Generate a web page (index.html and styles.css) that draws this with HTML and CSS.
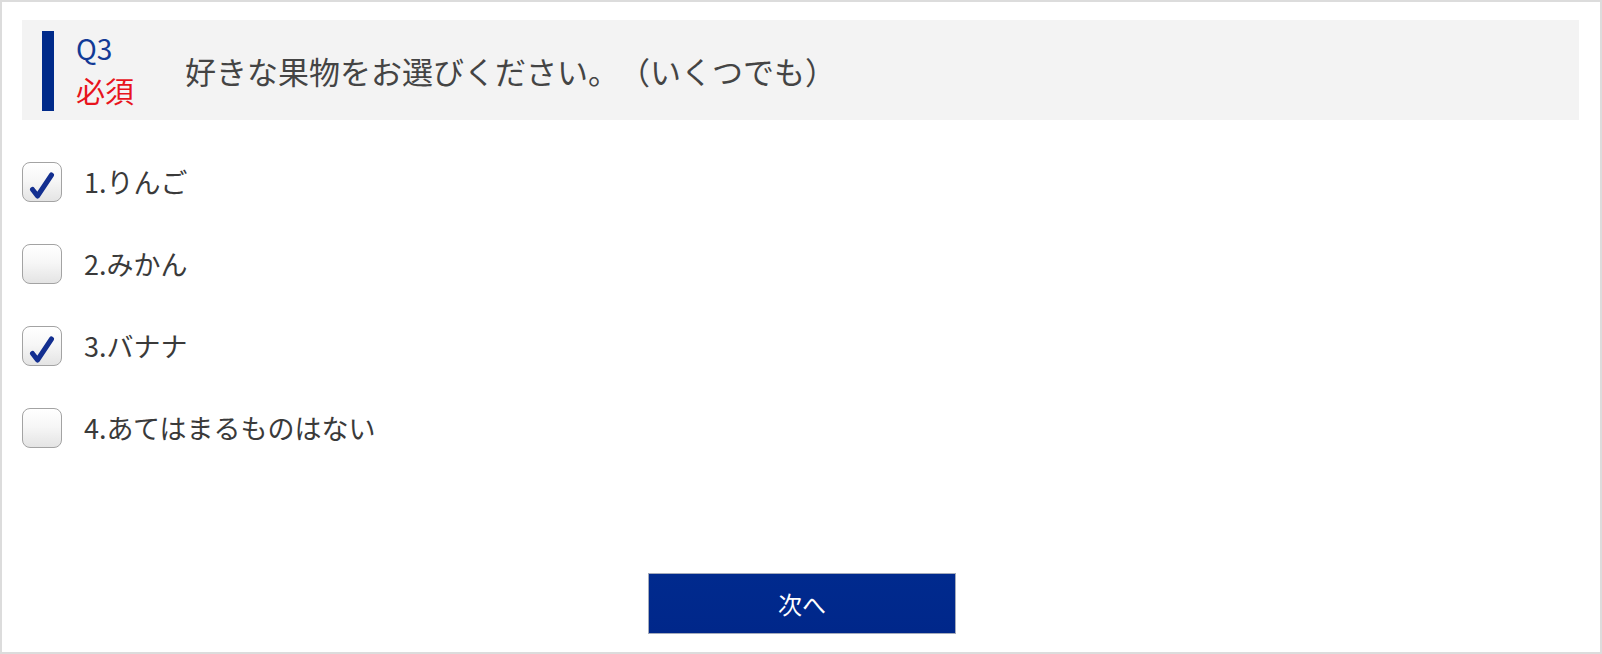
FILE: index.html
```html
<!DOCTYPE html>
<html lang="ja">
<head>
<meta charset="utf-8">
<title>Q3</title>
<link rel="stylesheet" href="styles.css">
</head>
<body>
<div class="page">
  <div class="question">
    <div class="qhead">
      <div class="qno">Q3</div>
      <div class="req">必須</div>
    </div>
    <div class="qtext">好きな果物をお選びください。（いくつでも）</div>
  </div>
  <ul class="options">
    <li class="option"><span class="box checked"><svg viewBox="0 0 40 40" width="40" height="40"><path d="M10.5 27.5 L15.5 34 L29.5 13" fill="none" stroke="#132f90" stroke-width="5" stroke-linecap="round" stroke-linejoin="round"/></svg></span><span class="label">1.りんご</span></li>
    <li class="option"><span class="box"></span><span class="label">2.みかん</span></li>
    <li class="option"><span class="box checked"><svg viewBox="0 0 40 40" width="40" height="40"><path d="M10.5 27.5 L15.5 34 L29.5 13" fill="none" stroke="#132f90" stroke-width="5" stroke-linecap="round" stroke-linejoin="round"/></svg></span><span class="label">3.バナナ</span></li>
    <li class="option"><span class="box"></span><span class="label">4.あてはまるものはない</span></li>
  </ul>
  <div class="actions">
    <button class="next" type="button">次へ</button>
  </div>
</div>
</body>
</html>
```
FILE: styles.css
```css
html, body {
  margin: 0;
  padding: 0;
  background: #fff;
}
body {
  font-family: "Noto Sans CJK JP", "Noto Sans", sans-serif;
  color: #333;
  text-spacing-trim: space-all;
}
.page {
  box-sizing: border-box;
  width: 1602px;
  height: 654px;
  border: 2px solid #dcdcdc;
  padding: 18px 21px 0 20px;
}
.question {
  display: flex;
  align-items: center;
  height: 100px;
  box-sizing: border-box;
  background: #f3f3f3;
  padding: 11px 0 9px 20px;
}
.qhead {
  height: 80px;
  border-left: 12px solid #002a8a;
  padding-left: 22px;
  width: 74px;
}
.qno {
  font-size: 28px;
  line-height: 40px;
  color: #123a96;
  margin-top: -3px;
}
.req {
  font-size: 29px;
  line-height: 40px;
  color: #e8141c;
  margin-top: 2px;
}
.qtext {
  font-size: 31px;
  line-height: 40px;
  color: #444;
  margin-left: 35px;
  margin-top: 0;
}
.options {
  list-style: none;
  margin: 42px 0 0 0;
  padding: 0;
  display: flex;
  flex-direction: column;
  gap: 42px;
}
.option {
  display: flex;
  align-items: center;
  height: 40px;
}
.box {
  box-sizing: border-box;
  width: 40px;
  height: 40px;
  border: 1px solid #a3a3a3;
  border-radius: 8px;
  background: linear-gradient(#ffffff 0%, #f7f7f7 45%, #e4e4e4 100%);
  display: block;
  overflow: hidden;
}
.box svg {
  display: block;
  margin: -1px;
}
.label {
  margin-left: 22px;
  font-size: 27px;
  line-height: 40px;
  color: #3a3a3a;
}
.actions {
  display: flex;
  justify-content: center;
  margin-top: 125px;
}
.next {
  width: 308px;
  height: 61px;
  box-sizing: border-box;
  border: 1px solid #a4abbc;
  background: linear-gradient(#002a8e, #00278a);
  color: #fff;
  font-family: "Noto Sans CJK JP", "Noto Sans", sans-serif;
  font-size: 24px;
  padding: 0;
  margin-left: 3px;
}
```
